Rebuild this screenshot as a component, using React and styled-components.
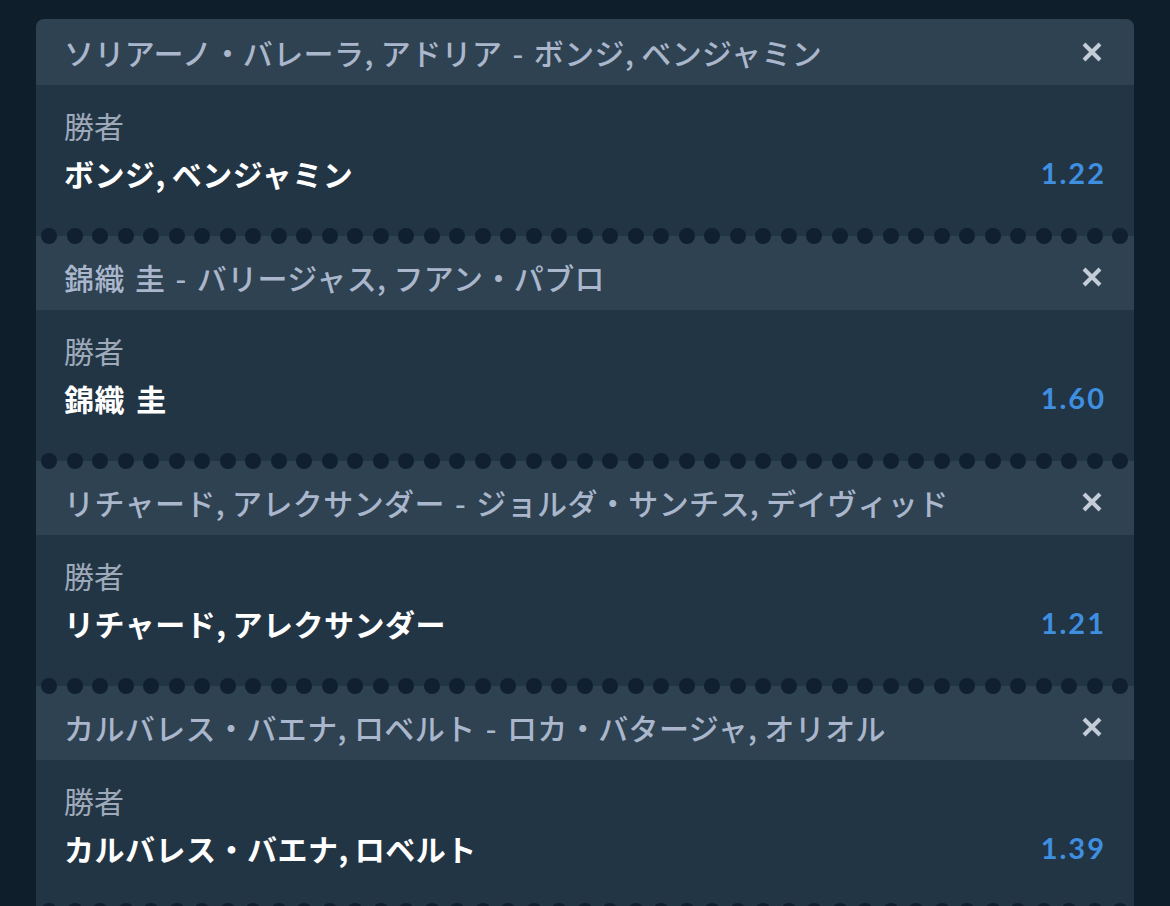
import React from "react";
import styled, { createGlobalStyle } from "styled-components";

const PAGE_BG = "#0f1e2b";
const HEAD_BG = "#2e4252";
const BODY_BG = "#223544";

const GlobalStyle = createGlobalStyle`
  html, body {
    margin: 0;
    padding: 0;
    background: ${PAGE_BG};
  }
  body {
    font-family: "Noto Sans CJK JP", "Noto Sans", sans-serif;
  }
`;

const Page = styled.div`
  width: 1170px;
  height: 906px;
  overflow: hidden;
  padding: 19px 36px 0;
  box-sizing: border-box;
`;

const Slip = styled.div`
  display: flex;
  flex-direction: column;
  border-radius: 8px 8px 0 0;
  overflow: hidden;
`;

const Header = styled.div`
  height: 66px;
  display: flex;
  align-items: center;
  justify-content: space-between;
  padding: 0 30px 0 28px;
  background: ${HEAD_BG};
`;

const Title = styled.div`
  color: #aab6cb;
  font-size: 30px;
  font-weight: 500;
  white-space: nowrap;
  letter-spacing: 0.4px;
  word-spacing: 3px;
`;

// latin comma sits in a wider box than the CJK font gives it
const Comma = styled.span`
  margin-right: ${(props) => props.gap || "7px"};
`;

const Close = styled.button`
  border: 0;
  background: none;
  padding: 0;
  width: 24px;
  height: 24px;
  display: flex;
  align-items: center;
  justify-content: center;
  cursor: pointer;
`;

const Body = styled.div`
  display: flex;
  align-items: flex-end;
  justify-content: space-between;
  padding: 20px 28px 35px;
  background: ${BODY_BG};
`;

const Market = styled.div`
  display: flex;
  flex-direction: column;
  gap: 8px;
`;

const Label = styled.div`
  color: #9ea9ba;
  font-size: 30px;
  line-height: 40px;
`;

const Pick = styled.div`
  color: #ffffff;
  font-size: 30px;
  line-height: 40px;
  font-weight: 700;
  letter-spacing: 0.5px;
  word-spacing: 4px;
`;

const Odds = styled.div`
  color: #3f8fe1;
  font-family: Lato, "Open Sans", sans-serif;
  font-size: 29px;
  font-weight: 700;
  line-height: 40px;
  letter-spacing: 2px;
`;

// perforated edge between two tickets
const Perforation = styled.div`
  height: 16px;
  display: flex;
  justify-content: space-between;
  padding: 0 6px 0 5px;
  background: linear-gradient(${BODY_BG} 50%, ${HEAD_BG} 50%);
`;

const Hole = styled.span`
  width: 16px;
  height: 16px;
  border-radius: 50%;
  background: #102030;
`;

const CloseIcon = () => (
  <svg width="22" height="22" viewBox="0 0 22 22">
    <path
      d="M3 3 L19 19 M19 3 L3 19"
      stroke="#c4ccd8"
      strokeWidth="4"
      strokeLinecap="butt"
    />
  </svg>
);

const Names = ({ text, gap }) => {
  const parts = text.split(",");
  return parts.map((part, i) => (
    <React.Fragment key={i}>
      {part}
      {i < parts.length - 1 && <Comma gap={gap}>,</Comma>}
    </React.Fragment>
  ));
};

const bets = [
  {
    event: "ソリアーノ・バレーラ,アドリア - ボンジ,ベンジャミン",
    pick: "ボンジ,ベンジャミン",
    odds: "1.22",
  },
  {
    event: "錦織 圭 - バリージャス,フアン・パブロ",
    pick: "錦織 圭",
    odds: "1.60",
  },
  {
    event: "リチャード,アレクサンダー - ジョルダ・サンチス,デイヴィッド",
    pick: "リチャード,アレクサンダー",
    odds: "1.21",
  },
  {
    event: "カルバレス・バエナ,ロベルト - ロカ・バタージャ,オリオル",
    pick: "カルバレス・バエナ,ロベルト",
    odds: "1.39",
  },
];

const holes = Array.from({ length: 43 }, (_, i) => i);

const Ticket = ({ bet }) => (
  <>
    <Header>
      <Title>
        <Names text={bet.event} gap="7px" />
      </Title>
      <Close aria-label="削除">
        <CloseIcon />
      </Close>
    </Header>
    <Body>
      <Market>
        <Label>勝者</Label>
        <Pick>
          <Names text={bet.pick} gap="6px" />
        </Pick>
      </Market>
      <Odds>{bet.odds}</Odds>
    </Body>
    <Perforation>
      {holes.map((i) => (
        <Hole key={i} />
      ))}
    </Perforation>
  </>
);

const App = () => (
  <>
    <GlobalStyle />
    <Page>
      <Slip>
        {bets.map((bet) => (
          <Ticket key={bet.odds} bet={bet} />
        ))}
      </Slip>
    </Page>
  </>
);

export default App;
